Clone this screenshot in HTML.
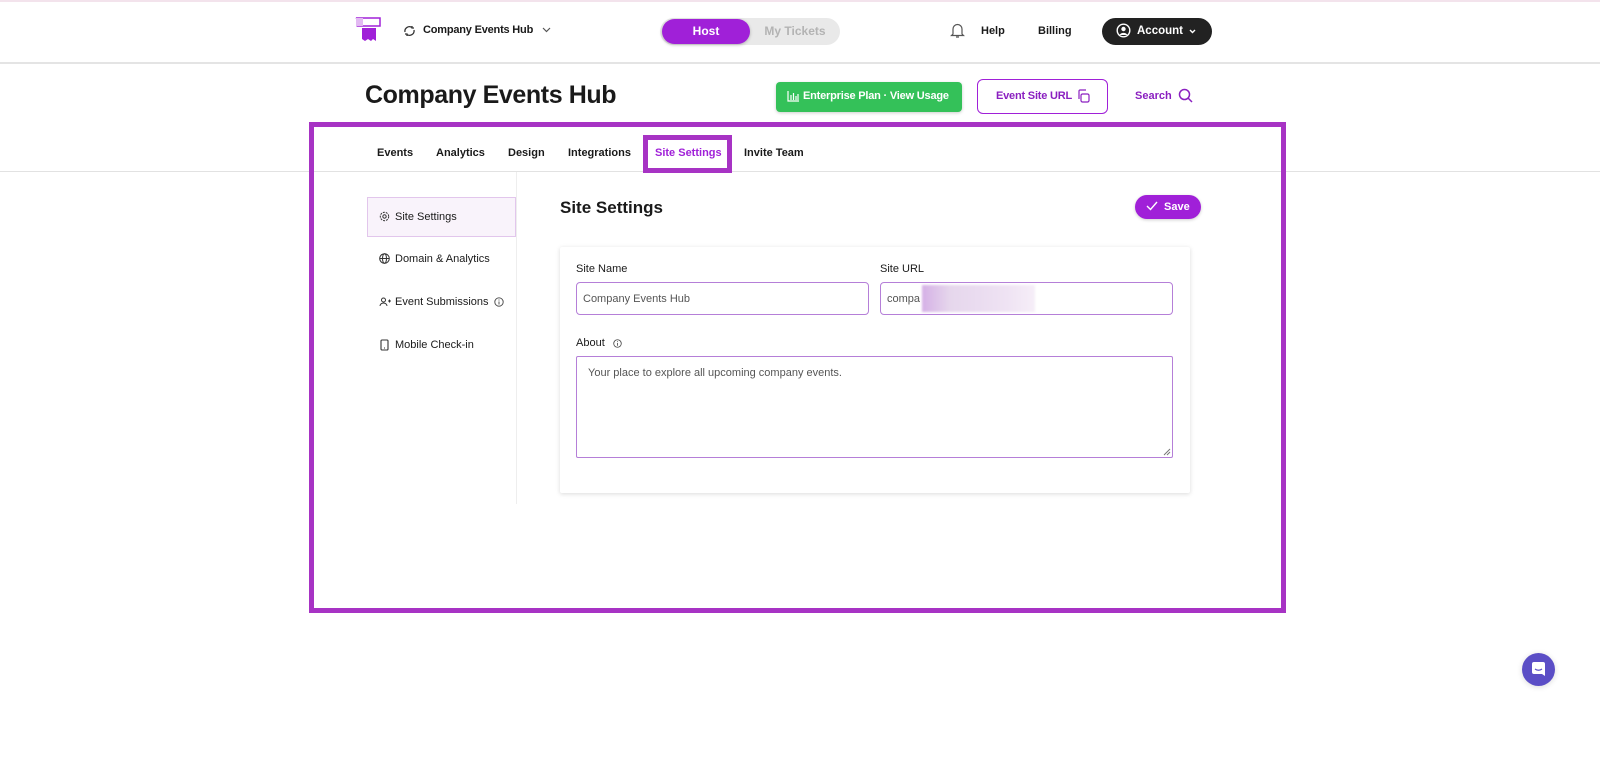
<!DOCTYPE html>
<html><head><meta charset="utf-8"><style>
*{box-sizing:border-box;margin:0;padding:0}
body{width:1600px;height:768px;position:relative;background:#fff;font-family:"Liberation Sans",sans-serif;color:#1a1a1a;overflow:hidden}
.a{position:absolute;white-space:nowrap}
.t{font-size:12px;font-weight:bold}
</style></head><body>
<div class="a" style="left:0;top:0;width:1600px;height:2px;background:#f3e3ec"></div>
<div class="a" style="left:0;top:62px;width:1600px;height:2px;background:#e4e4e4"></div>
<svg class="a" style="left:354px;top:17px" width="30" height="26" viewBox="0 0 30 26">
<path d="M2 1h24v8H4l2-2-2-2 2-2z" fill="#fff" stroke="#a020d8" stroke-width="1.5"/>
<rect x="2" y="1" width="7" height="8" fill="#e2b9f2"/>
<path d="M8 11h14v13l-3-2-2 2-3-2-3 2-3-2z" fill="#a020d8"/>
</svg>
<svg class="a" style="left:403px;top:25px" width="13" height="12" viewBox="0 0 13 12" fill="none" stroke="#333" stroke-width="1.3"><path d="M2 7a4.5 4.5 0 0 1 7-4.5M11 5a4.5 4.5 0 0 1-7 4.5M9 1v2h2M4 11V9H2"/></svg>
<div class="a t" style="left:423px;top:24px;font-size:11px;letter-spacing:-.2px">Company Events Hub</div>
<svg class="a" style="left:542px;top:27px" width="9" height="6" viewBox="0 0 9 6" fill="none" stroke="#555" stroke-width="1.2"><path d="M1 1l3.5 3.5L8 1"/></svg>
<div class="a" style="left:660px;top:18px;width:180px;height:27px;border-radius:14px;background:#e9e9e9"></div>
<div class="a t" style="left:662px;top:19px;width:88px;height:25px;border-radius:13px;background:#a020d8;color:#fff;text-align:center;line-height:25px;box-shadow:0 1px 3px rgba(0,0,0,.25)">Host</div>
<div class="a t" style="left:752px;top:19px;width:86px;line-height:25px;text-align:center;color:#b3b3b3">My Tickets</div>
<svg class="a" style="left:950px;top:22px" width="15" height="17" viewBox="0 0 15 17" fill="none" stroke="#555" stroke-width="1.2"><path d="M3 12V7a4.5 4.5 0 0 1 9 0v5l1.5 1.5h-12zM6 15h3"/></svg>
<div class="a t" style="left:981px;top:25px;font-size:11px">Help</div>
<div class="a t" style="left:1038px;top:25px;font-size:11px">Billing</div>
<div class="a" style="left:1102px;top:18px;width:110px;height:27px;border-radius:14px;background:#222"></div>
<svg class="a" style="left:1116px;top:23px" width="15" height="15" viewBox="0 0 15 15"><circle cx="7.5" cy="7.5" r="6.3" fill="none" stroke="#fff" stroke-width="1.4"/><circle cx="7.5" cy="6" r="2.2" fill="#fff"/><path d="M3.5 12a4.5 4 0 0 1 8 0" fill="#fff"/></svg>
<div class="a t" style="left:1137px;top:25px;color:#fff;font-size:11.5px">Account</div>
<svg class="a" style="left:1189px;top:29px" width="7" height="5" viewBox="0 0 7 5" fill="none" stroke="#fff" stroke-width="1.4"><path d="M1 1l2.5 2.5L6 1"/></svg>
<div class="a" style="left:365px;top:81px;font-size:25px;font-weight:bold;letter-spacing:-.4px">Company Events Hub</div>
<div class="a" style="left:776px;top:82px;width:186px;height:30px;border-radius:4px;background:#34c159;box-shadow:0 1px 3px rgba(0,0,0,.2)"></div>
<div class="a t" style="left:803px;top:90px;color:#fff;font-size:11px;letter-spacing:-.2px">Enterprise Plan · View Usage</div>
<svg class="a" style="left:787px;top:91px" width="12" height="11" viewBox="0 0 12 11" fill="none" stroke="#fff" stroke-width="1.2"><path d="M1 0v10h11M4 9V4M6.5 9V2M9 9V5M11 9V3"/></svg>
<div class="a" style="left:977px;top:79px;width:131px;height:35px;border-radius:6px;border:1px solid #a020d8"></div>
<div class="a t" style="left:996px;top:90px;color:#8a1fc0;font-size:11px;letter-spacing:-.2px">Event Site URL</div>
<svg class="a" style="left:1077px;top:89px" width="13" height="14" viewBox="0 0 13 14" fill="none" stroke="#8a1fc0" stroke-width="1.2"><rect x="4" y="5" width="8" height="8" rx="1.5"/><path d="M2 10V2a1 1 0 0 1 1-1h6"/></svg>
<div class="a t" style="left:1135px;top:90px;color:#8a1fc0;font-size:11px">Search</div>
<svg class="a" style="left:1178px;top:88px" width="15" height="15" viewBox="0 0 15 15" fill="none" stroke="#8a1fc0" stroke-width="1.5"><circle cx="6.5" cy="6.5" r="5"/><path d="M10 10l4 4"/></svg>
<div class="a" style="left:0;top:171px;width:1600px;height:1px;background:#e2e2e2"></div>
<div class="a t" style="left:377px;top:147px;font-size:11px">Events</div>
<div class="a t" style="left:436px;top:147px;font-size:11px">Analytics</div>
<div class="a t" style="left:508px;top:147px;font-size:11px">Design</div>
<div class="a t" style="left:568px;top:147px;font-size:11px">Integrations</div>
<div class="a" style="left:643px;top:135px;width:89px;height:38px;border:5px solid #a733c4;background:#fff"></div>
<div class="a t" style="left:655px;top:147px;color:#a020d8;font-size:11px">Site Settings</div>
<div class="a t" style="left:744px;top:147px;font-size:11px">Invite Team</div>
<div class="a" style="left:516px;top:172px;width:1px;height:332px;background:#eee"></div>
<div class="a" style="left:367px;top:197px;width:149px;height:40px;background:#f9f3fb;border:1px solid #e2c6ec"></div>
<div class="a" style="left:395px;top:211px;font-size:11px">Site Settings</div>
<div class="a" style="left:395px;top:253px;font-size:11px">Domain &amp; Analytics</div>
<div class="a" style="left:395px;top:296px;font-size:11px">Event Submissions</div>
<div class="a" style="left:395px;top:339px;font-size:11px">Mobile Check-in</div>
<svg class="a" style="left:379px;top:211px" width="11" height="11" viewBox="0 0 11 11" fill="none" stroke="#333" stroke-width="1"><circle cx="5.5" cy="5.5" r="1.7"/><circle cx="5.5" cy="5.5" r="4.2" stroke-dasharray="2 1"/></svg>
<svg class="a" style="left:379px;top:253px" width="11" height="11" viewBox="0 0 11 11" fill="none" stroke="#333" stroke-width="1"><circle cx="5.5" cy="5.5" r="4.8"/><ellipse cx="5.5" cy="5.5" rx="2" ry="4.8"/><path d="M.7 5.5h9.6"/></svg>
<svg class="a" style="left:379px;top:297px" width="12" height="10" viewBox="0 0 12 10" fill="none" stroke="#333" stroke-width="1"><circle cx="4.5" cy="3" r="2"/><path d="M1 9a3.5 3 0 0 1 7 0M9 4h3M10.5 2.5v3"/></svg>
<svg class="a" style="left:494px;top:297px" width="10" height="10" viewBox="0 0 10 10" fill="none" stroke="#444" stroke-width=".9"><circle cx="5" cy="5" r="4.2"/><path d="M5 4.5v3M5 2.5v1"/></svg>
<svg class="a" style="left:380px;top:339px" width="9" height="12" viewBox="0 0 9 12" fill="none" stroke="#333" stroke-width="1.1"><rect x="1" y="1" width="7" height="10" rx="1"/><path d="M4 9h1"/></svg>
<div class="a" style="left:560px;top:198px;font-size:17px;font-weight:bold">Site Settings</div>
<div class="a t" style="left:1135px;top:195px;width:66px;height:24px;border-radius:12px;background:#a020d8;color:#fff;line-height:24px;padding-left:29px;font-size:11px;box-shadow:0 1px 3px rgba(0,0,0,.2)">Save</div>
<svg class="a" style="left:1146px;top:201px" width="12" height="10" viewBox="0 0 12 10" fill="none" stroke="#fff" stroke-width="1.4"><path d="M1 5l3.5 3.5L11 1"/></svg>
<div class="a" style="left:560px;top:247px;width:630px;height:246px;background:#fff;box-shadow:0 1px 5px rgba(0,0,0,.15);border-radius:2px"></div>
<div class="a" style="left:576px;top:263px;font-size:11px">Site Name</div>
<div class="a" style="left:880px;top:263px;font-size:11px">Site URL</div>
<div class="a" style="left:576px;top:282px;width:293px;height:33px;border:1px solid #b57fd8;border-radius:4px;font-size:11px;color:#555;padding:10px 0 0 6px">Company Events Hub</div>
<div class="a" style="left:880px;top:282px;width:293px;height:33px;border:1px solid #b57fd8;border-radius:4px;font-size:11px;color:#555;padding:10px 0 0 6px">compa</div>
<div class="a" style="left:922px;top:285px;width:113px;height:27px;background:linear-gradient(90deg,#d5b0e6,#e6d7ec,#eadcf0,#efe3f3,#f6eef8);filter:blur(1px)"></div>
<div class="a" style="left:576px;top:337px;font-size:11px">About</div>
<svg class="a" style="left:613px;top:339px" width="9" height="9" viewBox="0 0 10 10" fill="none" stroke="#444" stroke-width=".9"><circle cx="5" cy="5" r="4.2"/><path d="M5 4.5v3M5 2.5v1"/></svg>
<div class="a" style="left:576px;top:356px;width:597px;height:102px;border:1px solid #b57fd8;border-radius:2px;font-size:11px;color:#555;padding:10px 0 0 11px">Your place to explore all upcoming company events.</div>
<svg class="a" style="left:1163px;top:448px" width="8" height="8" viewBox="0 0 8 8" stroke="#777" stroke-width="1"><path d="M7 1L1 7M7 4L4 7"/></svg>
<div class="a" style="left:309px;top:122px;width:977px;height:491px;border:5px solid #a733c4"></div>
<div class="a" style="left:1522px;top:653px;width:33px;height:33px;border-radius:50%;background:#5b4ec6;box-shadow:0 1px 6px rgba(0,0,0,.15)"></div>
<svg class="a" style="left:1530px;top:661px" width="17" height="17" viewBox="0 0 17 17"><path d="M2 3a2 2 0 0 1 2-2h9a2 2 0 0 1 2 2v12l-3-2H4a2 2 0 0 1-2-2z" fill="#fff"/><path d="M5 8q3.5 2.5 7 0" fill="none" stroke="#5b4ec6" stroke-width="1.2"/></svg>
</body></html>
